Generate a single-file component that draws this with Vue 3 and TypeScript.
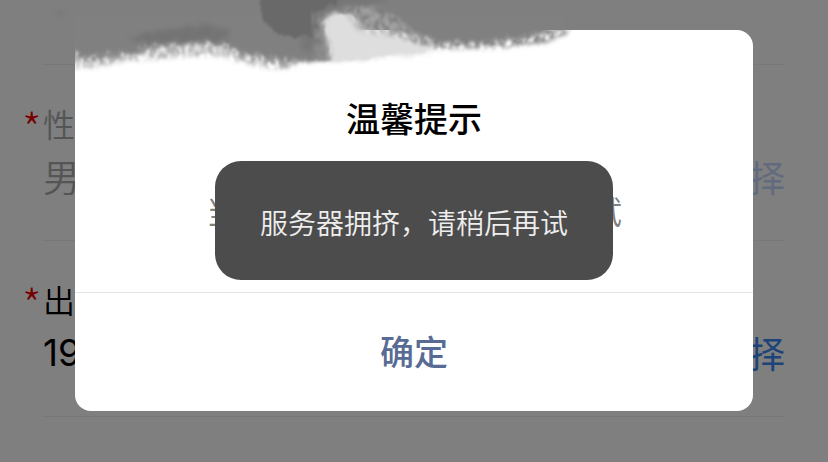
<script setup lang="ts">
import { ref } from 'vue'

interface Field {
  id: string
  label: string
  value: string
  disabled: boolean
}

const fields: Field[] = [
  { id: 'gender', label: '性别', value: '男', disabled: true },
  { id: 'birthday', label: '出生日期', value: '1990', disabled: false },
]

const dialogOpen = ref(true)
</script>

<template>
  <div class="screen">
    <form class="form">
      <div class="spacer"></div>
      <div v-for="f in fields" :key="f.id" class="row" :class="{ disabled: f.disabled }">
        <label class="label" :for="f.id">{{ f.label }}</label>
        <div class="line">
          <input :id="f.id" class="value" type="text" :value="f.value" :disabled="f.disabled" readonly />
          <button class="pick" type="button" :disabled="f.disabled">选择</button>
        </div>
      </div>
    </form>

    <div v-if="dialogOpen" class="mask">
      <section class="dialog" role="dialog" aria-labelledby="dialog-title">
        <div class="body">
          <h2 id="dialog-title" class="title">温馨提示</h2>
          <p class="message">当前系统繁忙，请您稍后再试</p>
        </div>
        <button class="confirm" type="button" @click="dialogOpen = false">确定</button>
      </section>
    </div>

    <svg class="brush" width="600" height="80" viewBox="0 0 600 80" aria-hidden="true">
      <defs>
        <filter id="rough" x="-5%" y="-20%" width="110%" height="140%" color-interpolation-filters="sRGB">
          <feTurbulence type="fractalNoise" baseFrequency="0.12 0.16" numOctaves="3" seed="4" result="n" />
          <feDisplacementMap in="SourceGraphic" in2="n" scale="8" xChannelSelector="R" yChannelSelector="G" />
          <feGaussianBlur stdDeviation="1" />
        </filter>
        <filter id="soft" x="-10%" y="-30%" width="120%" height="160%" color-interpolation-filters="sRGB">
          <feTurbulence type="fractalNoise" baseFrequency="0.15 0.2" numOctaves="3" seed="9" result="n" />
          <feDisplacementMap in="SourceGraphic" in2="n" scale="12" xChannelSelector="R" yChannelSelector="G" />
          <feGaussianBlur stdDeviation="2" />
        </filter>
        <filter id="speckle" x="-5%" y="-20%" width="110%" height="140%" color-interpolation-filters="sRGB">
          <feTurbulence type="fractalNoise" baseFrequency="0.2 0.13" numOctaves="4" seed="12" result="n" />
          <feColorMatrix in="n" type="matrix" values="0 0 0 0 0  0 0 0 0 0  0 0 0 0 0  3 0 0 0 -0.9" result="m" />
          <feGaussianBlur in="SourceGraphic" stdDeviation="2" result="s" />
          <feComposite in="s" in2="m" operator="in" />
          <feGaussianBlur stdDeviation="0.8" />
        </filter>
        <clipPath id="card"><path d="M75 30H600V80H75Z" /></clipPath>
      </defs>
      <g clip-path="url(#card)">
        <path filter="url(#rough)" fill="#ededed" d="M60 10H350L440 48L425 51L384 54L366 60L330 60L300 59L286 64L262 63L240 58L224 54L212 53L190 55L160 57L130 59L110 61L90 64L60 64Z" />
        <path filter="url(#speckle)" fill="#b4b4b4" d="M60 15H330V60L300 62L286 70L262 67L240 62L224 56L190 56L160 59L130 61L110 64L90 68L60 68Z" />
        <path filter="url(#speckle)" fill="#8c8c8c" d="M60 15H330V60L300 60L286 64L262 61L240 56L224 46L190 43L160 47L130 53L110 58L90 61L60 60Z" />
        <path filter="url(#speckle)" fill="#8c8c8c" d="M370 12H575L567 34L545 43L500 48L440 49L400 45Z" />
        <path filter="url(#soft)" fill="#808080" d="M50 0H330V60L312 61L290 60L262 55L240 50L224 42L190 41L165 44L148 47L132 53L105 55L90 56L50 52Z" />
        <path filter="url(#soft)" fill="#808080" d="M372 0H545V33L525 38L480 43L440 43L420 37L392 30Z" />
      </g>
      <path fill="#808080" d="M75 15H564V30H75Z" />
      <path fill="#808080" d="M74 28H100V44H75V64H74Z" />
      <path filter="url(#soft)" fill="#6c6c6c" opacity=".6" d="M126 37L160 31L205 24L230 31L228 40L190 41L150 43Z" />
      <path filter="url(#soft)" fill="#747474" d="M290 -8H390L380 4L340 8L320 20L318 55L302 50L300 30Z" opacity=".7" />
      <path filter="url(#rough)" fill="#696969" d="M258 -8H345L336 4L320 10L314 36L295 37L276 33L264 22Z" />
      <path filter="url(#soft)" fill="#dedede" d="M322 19L331 14L352 14L364 29L384 35L404 37L416 45L440 51L420 54L384 56L366 60L332 62L326 44Z" />
      <path filter="url(#rough)" fill="#dedede" d="M324 22L332 15L352 17L361 30L382 36L400 38L412 46L430 51L384 54L366 59L334 60L327 44Z" />
      <path filter="url(#speckle)" fill="#b0b0b0" opacity=".7" d="M342 8L375 6L398 18L414 32L430 46L400 38L358 32Z" />
      <path filter="url(#speckle)" fill="#909090" d="M312 12L329 12L325 28L333 60L314 60Z" opacity=".8" />
      <path filter="url(#soft)" fill="#707070" opacity=".5" d="M50 13L62 10L66 15L58 16Z" />
    </svg>

    <div class="toast-layer">
      <div class="toast" role="status">服务器拥挤，请稍后再试</div>
    </div>
  </div>
</template>

<style>
body {
  margin: 0;
  background: #fff;
}
</style>

<style scoped>
.screen {
  position: relative;
  min-height: 100vh;
  overflow: hidden;
  font-family: "Noto Sans CJK SC", sans-serif;
}

button,
input {
  margin: 0;
  padding: 0;
  border: 0;
  background: none;
  font-family: inherit;
}

.form {
  padding: 0 43px;
}

.spacer {
  height: 64px;
  border-bottom: 1px solid #f0f0f0;
}

.row {
  box-sizing: border-box;
  height: 176px;
  padding-top: 34px;
  border-bottom: 1px solid #f0f0f0;
}

.label {
  display: block;
  position: relative;
  font-size: 32px;
  font-weight: 350;
  line-height: 48px;
  color: #000;
}

.label::before {
  content: "*";
  position: absolute;
  top: 4px;
  left: -21px;
  font-size: 44px;
  font-weight: 300;
  color: #f00000;
}

.line {
  display: flex;
  align-items: center;
  justify-content: space-between;
  height: 58px;
}

.value {
  flex: 1;
  min-width: 0;
  font-size: 37px;
  font-weight: 350;
  color: #000;
}

#birthday {
  font-family: Inter, sans-serif;
  font-weight: 400;
}

.pick {
  font-size: 36px;
  line-height: 54px;
  color: #3a86f0;
}

.disabled .label,
.disabled .value {
  color: #aaa;
}

.disabled .pick {
  color: #c4d6fa;
}

.mask {
  position: absolute;
  inset: 0;
  display: flex;
  align-items: flex-start;
  justify-content: center;
  padding-top: 30px;
  background: rgba(0, 0, 0, 0.5);
}

.dialog {
  width: 82%;
  overflow: hidden;
  border-radius: 16px;
  background: #fff;
}

.body {
  padding: 63px 0 55px;
  text-align: center;
}

.title {
  margin: 0;
  font-size: 34px;
  font-weight: 500;
  line-height: 50px;
  color: #000;
}

.message {
  margin: 40px 0 0;
  font-size: 32px;
  font-weight: 350;
  line-height: 54px;
  color: #808080;
}

.confirm {
  display: block;
  width: 100%;
  padding-bottom: 2px;
  border-top: 1px solid #e5e5e5;
  font-size: 34px;
  font-weight: 500;
  line-height: 116px;
  color: #576b95;
}

.brush {
  position: absolute;
  top: 0;
  left: 0;
  pointer-events: none;
}

.toast-layer {
  position: absolute;
  inset: 0;
  display: flex;
  align-items: flex-start;
  justify-content: center;
  padding-top: 161px;
  pointer-events: none;
}

.toast {
  padding: 40px 45px 37px;
  border-radius: 26px;
  background: #4c4c4c;
  color: #eee;
  font-size: 28px;
  font-weight: 350;
  line-height: 42px;
}
</style>
